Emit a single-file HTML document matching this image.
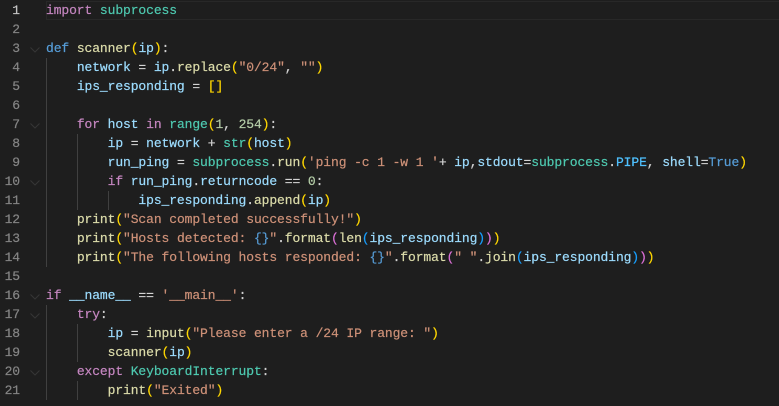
<!DOCTYPE html>
<html>
<head>
<meta charset="utf-8">
<style>
html,body{margin:0;padding:0;background:#1e1e1e;}
#e{position:relative;width:779px;height:406px;overflow:hidden;background:#1e1e1e;}
.hl{position:absolute;left:46px;right:0;top:1px;height:17px;border:1px solid #282828;border-right:0;}
.l,.n{position:absolute;height:19px;line-height:19px;font-family:"Liberation Mono",monospace;font-size:13px;letter-spacing:-0.1px;white-space:pre;-webkit-text-stroke:0.2px;}
.l{left:46px;color:#d4d4d4;}
.n{left:0;width:20px;text-align:right;color:#858585;}
.n.a{color:#c6c6c6;}
.g{position:absolute;width:1px;background:#404040;}
.c{position:absolute;left:30px;width:10px;height:6px;}
.k{color:#c586c0}.d{color:#569cd6}.v{color:#9cdcfe}.f{color:#dcdcaa}.s{color:#ce9178}.t{color:#4ec9b0}.m{color:#b5cea8}
.y{color:#ffd700}.p{color:#da70d6}.b{color:#179fff}.o{color:#4fc1ff}
</style>
</head>
<body>
<div id="e">
<div class="hl"></div>
<div class="g" style="left:46px;top:58px;height:209px"></div>
<div class="g" style="left:77px;top:134px;height:76px"></div>
<div class="g" style="left:108px;top:191px;height:19px"></div>
<div class="g" style="left:46px;top:305px;height:95px"></div>
<div class="g" style="left:77px;top:324px;height:38px"></div>
<div class="g" style="left:77px;top:381px;height:19px"></div>
<svg class="c" style="top:47px" viewBox="0 0 10 6"><path d="M.5.5 5 5 9.500.5" fill="none" stroke="#363636"/></svg>
<svg class="c" style="top:123px" viewBox="0 0 10 6"><path d="M.5.5 5 5 9.500.5" fill="none" stroke="#363636"/></svg>
<svg class="c" style="top:180px" viewBox="0 0 10 6"><path d="M.5.5 5 5 9.500.5" fill="none" stroke="#363636"/></svg>
<svg class="c" style="top:294px" viewBox="0 0 10 6"><path d="M.5.5 5 5 9.500.5" fill="none" stroke="#363636"/></svg>
<svg class="c" style="top:313px" viewBox="0 0 10 6"><path d="M.5.5 5 5 9.500.5" fill="none" stroke="#363636"/></svg>
<svg class="c" style="top:370px" viewBox="0 0 10 6"><path d="M.5.5 5 5 9.500.5" fill="none" stroke="#363636"/></svg>
<div class="n a" style="top:1px">1</div>
<div class="n" style="top:20px">2</div>
<div class="n" style="top:39px">3</div>
<div class="n" style="top:58px">4</div>
<div class="n" style="top:77px">5</div>
<div class="n" style="top:96px">6</div>
<div class="n" style="top:115px">7</div>
<div class="n" style="top:134px">8</div>
<div class="n" style="top:153px">9</div>
<div class="n" style="top:172px">10</div>
<div class="n" style="top:191px">11</div>
<div class="n" style="top:210px">12</div>
<div class="n" style="top:229px">13</div>
<div class="n" style="top:248px">14</div>
<div class="n" style="top:267px">15</div>
<div class="n" style="top:286px">16</div>
<div class="n" style="top:305px">17</div>
<div class="n" style="top:324px">18</div>
<div class="n" style="top:343px">19</div>
<div class="n" style="top:362px">20</div>
<div class="n" style="top:381px">21</div>
<div class="l" style="top:1px"><span class="k">import</span> <span class="t">subprocess</span></div>
<div class="l" style="top:39px"><span class="d">def</span> <span class="f">scanner</span><span class="y">(</span><span class="v">ip</span><span class="y">)</span>:</div>
<div class="l" style="top:58px">    <span class="v">network</span> = <span class="v">ip</span>.<span class="f">replace</span><span class="y">(</span><span class="s">"0/24"</span>, <span class="s">""</span><span class="y">)</span></div>
<div class="l" style="top:77px">    <span class="v">ips_responding</span> = <span class="y">[]</span></div>
<div class="l" style="top:115px">    <span class="k">for</span> <span class="v">host</span> <span class="k">in</span> <span class="t">range</span><span class="y">(</span><span class="m">1</span>, <span class="m">254</span><span class="y">)</span>:</div>
<div class="l" style="top:134px">        <span class="v">ip</span> = <span class="v">network</span> + <span class="t">str</span><span class="y">(</span><span class="v">host</span><span class="y">)</span></div>
<div class="l" style="top:153px">        <span class="v">run_ping</span> = <span class="t">subprocess</span>.<span class="f">run</span><span class="y">(</span><span class="s">'ping -c 1 -w 1 '</span>+ <span class="v">ip</span>,<span class="v">stdout</span>=<span class="t">subprocess</span>.<span class="o">PIPE</span>, <span class="v">shell</span>=<span class="d">True</span><span class="y">)</span></div>
<div class="l" style="top:172px">        <span class="k">if</span> <span class="v">run_ping</span>.<span class="v">returncode</span> == <span class="m">0</span>:</div>
<div class="l" style="top:191px">            <span class="v">ips_responding</span>.<span class="f">append</span><span class="y">(</span><span class="v">ip</span><span class="y">)</span></div>
<div class="l" style="top:210px">    <span class="f">print</span><span class="y">(</span><span class="s">"Scan completed successfully!"</span><span class="y">)</span></div>
<div class="l" style="top:229px">    <span class="f">print</span><span class="y">(</span><span class="s">"Hosts detected: </span><span class="d">{}</span><span class="s">"</span>.<span class="f">format</span><span class="p">(</span><span class="f">len</span><span class="b">(</span><span class="v">ips_responding</span><span class="b">)</span><span class="p">)</span><span class="y">)</span></div>
<div class="l" style="top:248px">    <span class="f">print</span><span class="y">(</span><span class="s">"The following hosts responded: </span><span class="d">{}</span><span class="s">"</span>.<span class="f">format</span><span class="p">(</span><span class="s">" "</span>.<span class="f">join</span><span class="b">(</span><span class="v">ips_responding</span><span class="b">)</span><span class="p">)</span><span class="y">)</span></div>
<div class="l" style="top:286px"><span class="k">if</span> <span class="v">__name__</span> == <span class="s">'__main__'</span>:</div>
<div class="l" style="top:305px">    <span class="k">try</span>:</div>
<div class="l" style="top:324px">        <span class="v">ip</span> = <span class="f">input</span><span class="y">(</span><span class="s">"Please enter a /24 IP range: "</span><span class="y">)</span></div>
<div class="l" style="top:343px">        <span class="f">scanner</span><span class="y">(</span><span class="v">ip</span><span class="y">)</span></div>
<div class="l" style="top:362px">    <span class="k">except</span> <span class="t">KeyboardInterrupt</span>:</div>
<div class="l" style="top:381px">        <span class="f">print</span><span class="y">(</span><span class="s">"Exited"</span><span class="y">)</span></div>
</div>
</body>
</html>
